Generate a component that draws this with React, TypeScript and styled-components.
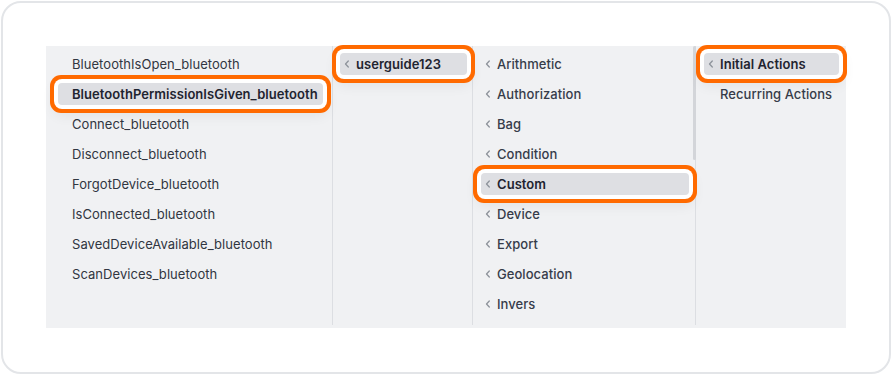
import * as React from "react";
import styled, { createGlobalStyle } from "styled-components";

const GlobalStyle = createGlobalStyle`
  html, body {
    margin: 0;
    padding: 0;
    background: #fff;
  }
  body {
    font-family: Inter, "Noto Sans", sans-serif;
    -webkit-font-smoothing: antialiased;
  }
  * {
    box-sizing: border-box;
  }
`;

const Card = styled.div`
  width: 890px;
  height: 373px;
  margin: 1px;
  padding: 43px;
  border: 2px solid #e3e5e8;
  border-radius: 20px;
  background: #fff;
`;

const Browser = styled.div`
  display: flex;
  width: 800px;
  height: 282px;
  padding-bottom: 3px;
  background: #f0f1f3;
`;

const Column = styled.div<{ $width: number; $pl: number; $pr: number; $last?: boolean }>`
  position: relative;
  flex: 0 0 ${(p) => p.$width}px;
  display: flex;
  flex-direction: column;
  gap: 8px;
  padding: 7px ${(p) => p.$pr}px 0 ${(p) => p.$pl}px;
  border-right: ${(p) => (p.$last ? "none" : "1px solid #dcdee2")};
`;

const ScrollThumb = styled.div`
  position: absolute;
  top: 0;
  right: -1px;
  width: 3px;
  height: 114px;
  border-radius: 2px;
  background: #d3d5d9;
`;

const Item = styled.div<{ $selected?: boolean; $strong?: boolean; $plain?: boolean }>`
  position: relative;
  flex: 0 0 22px;
  display: flex;
  align-items: center;
  gap: 6px;
  padding-left: ${(p) => (p.$plain ? 14 : 4)}px;
  border-radius: 4px;
  font-size: 13px;
  letter-spacing: 0.05px;
  white-space: nowrap;
  color: ${(p) => (p.$selected ? "#1f2430" : p.$strong ? "#363c4a" : "#313641")};
  font-weight: ${(p) => (p.$selected ? 600 : p.$strong ? 500 : 400)};
  background: ${(p) => (p.$selected ? "#dedfe3" : "transparent")};
  box-shadow: ${(p) =>
    p.$selected
      ? "0 0 0 4px #fff, 0 0 0 8px #ff6a00, 0 6px 14px 4px rgba(20, 24, 35, 0.07)"
      : "none"};
  z-index: ${(p) => (p.$selected ? 1 : 0)};
`;

const ChevronBox = styled.svg<{ $hidden?: boolean }>`
  flex: 0 0 6px;
  visibility: ${(p) => (p.$hidden ? "hidden" : "visible")};
`;

const Chevron = ({ hidden }: { hidden?: boolean }) => (
  <ChevronBox $hidden={hidden} width="6" height="8" viewBox="0 0 6 8">
    <path
      d="M4.3 1 L1.5 4 L4.3 7"
      fill="none"
      stroke="#8e939b"
      strokeWidth="1.3"
      strokeLinecap="round"
      strokeLinejoin="round"
    />
  </ChevronBox>
);

const actions = [
  "BluetoothIsOpen_bluetooth",
  "BluetoothPermissionIsGiven_bluetooth",
  "Connect_bluetooth",
  "Disconnect_bluetooth",
  "ForgotDevice_bluetooth",
  "IsConnected_bluetooth",
  "SavedDeviceAvailable_bluetooth",
  "ScanDevices_bluetooth",
];

const categories = [
  "Arithmetic",
  "Authorization",
  "Bag",
  "Condition",
  "Custom",
  "Device",
  "Export",
  "Geolocation",
  "Invers",
];

export default function App() {
  return (
    <>
      <GlobalStyle />
      <Card>
        <Browser>
          <Column $width={287} $pl={12} $pr={9}>
            {actions.map((a, i) => (
              <Item key={a} $plain $selected={i === 1}>
                {a}
              </Item>
            ))}
          </Column>
          <Column $width={140} $pl={7} $pr={5}>
            <Item $selected>
              <Chevron />
              userguide123
            </Item>
          </Column>
          <Column $width={223} $pl={8} $pr={6}>
            <ScrollThumb />
            {categories.map((c) => (
              <Item key={c} $strong $selected={c === "Custom"}>
                <Chevron />
                {c}
              </Item>
            ))}
          </Column>
          <Column $width={150} $pl={8} $pr={7} $last>
            <Item $selected>
              <Chevron />
              Initial Actions
            </Item>
            <Item $strong>
              <Chevron hidden />
              Recurring Actions
            </Item>
          </Column>
        </Browser>
      </Card>
    </>
  );
}
